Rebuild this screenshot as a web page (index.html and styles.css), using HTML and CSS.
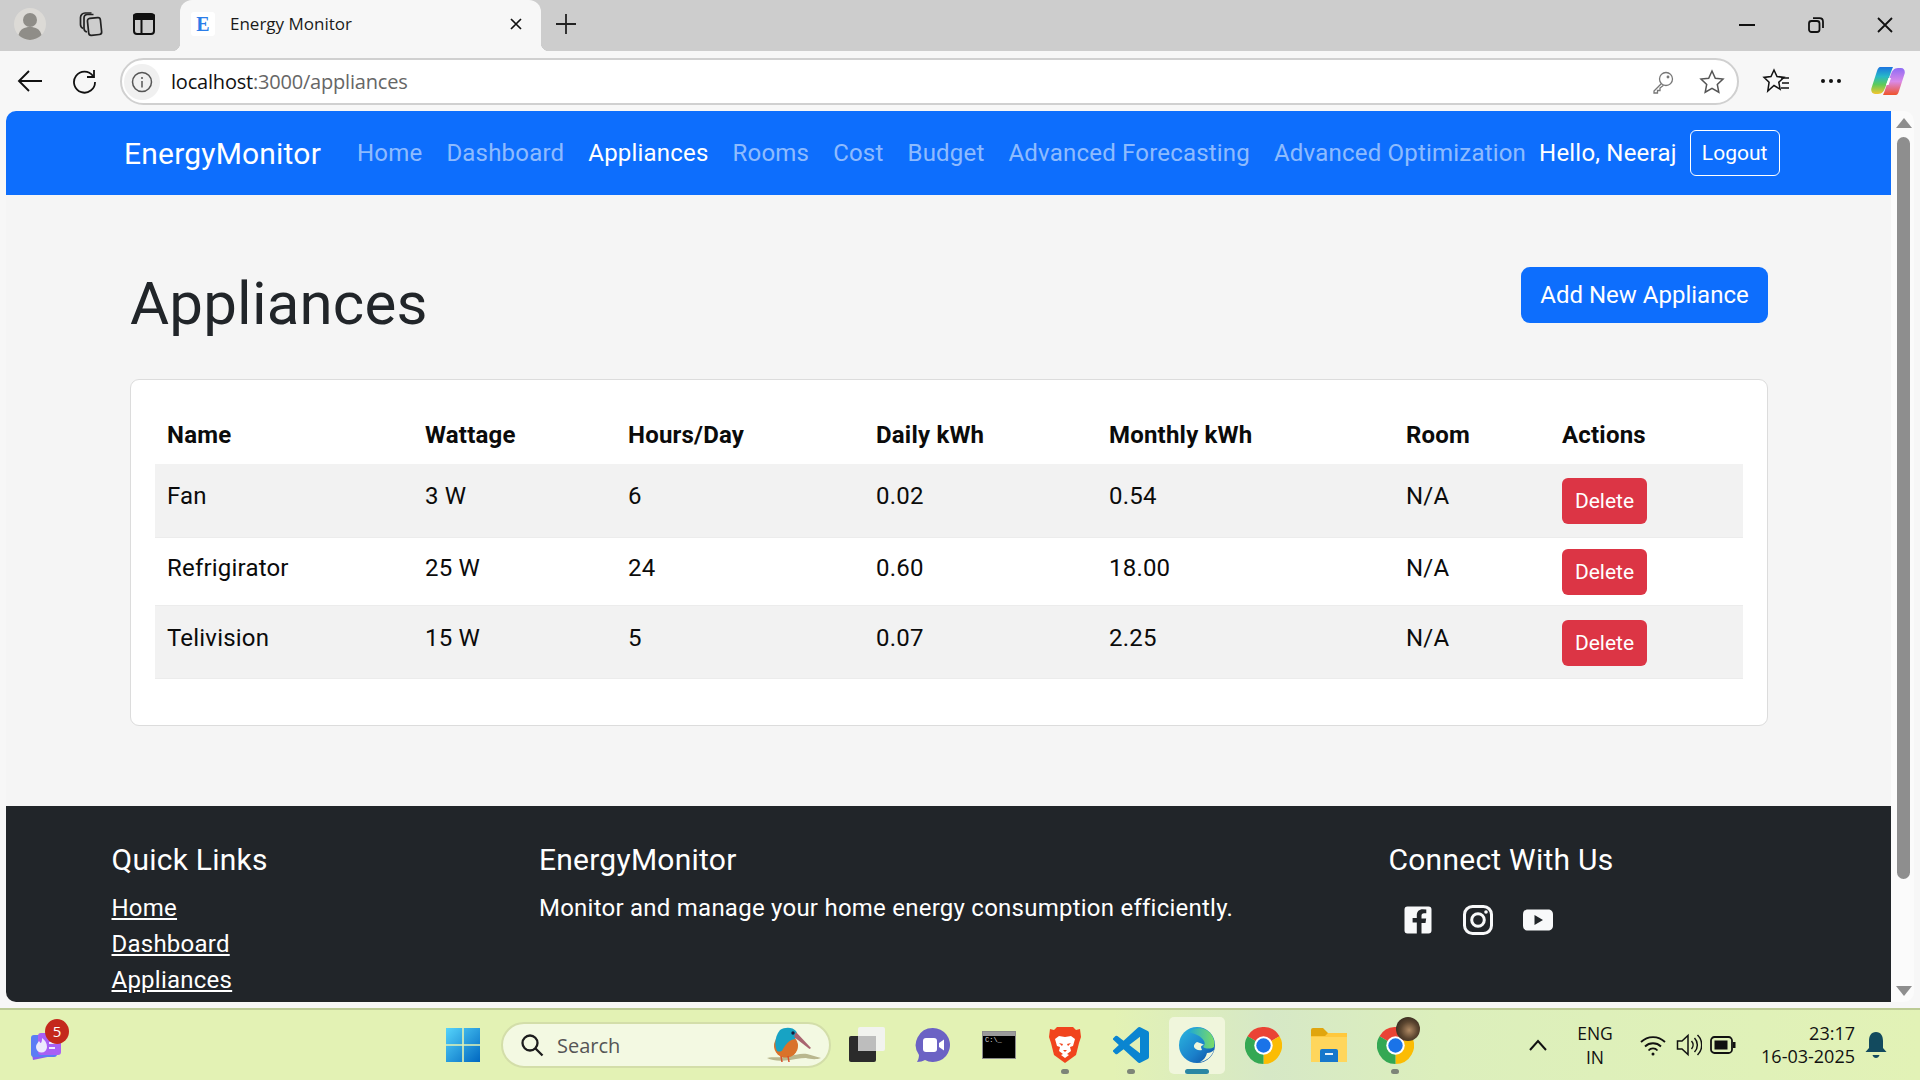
FILE: index.html
```html
<!DOCTYPE html>
<html lang="en">
<head>
<meta charset="utf-8">
<title>Energy Monitor</title>
<link rel="stylesheet" href="styles.css">
</head>
<body>
<svg class="defs" width="0" height="0" aria-hidden="true">
  <defs>
    <symbol id="chrome" viewBox="0 0 36 36">
      <path fill="#ea4335" d="M18 18L2.4 9A18 18 0 0 1 33.6 9Z"/>
      <path fill="#fbbc04" d="M18 18L33.6 9A18 18 0 0 1 18 36Z"/>
      <path fill="#34a853" d="M18 18L18 36A18 18 0 0 1 2.4 9Z"/>
      <circle cx="18" cy="18" r="9" fill="#fff"/>
      <circle cx="18" cy="18" r="7" fill="#1a73e8"/>
    </symbol>
  </defs>
</svg>

<header class="tabstrip">
  <div class="tab-left">
    <svg class="ic-profile" width="34" height="34" viewBox="0 0 34 34"><circle cx="17" cy="17" r="16" fill="#dcdad6"/><circle cx="17" cy="13" r="7" fill="#8f8d88"/><path d="M5.5 28c1.5-6 6-8 11.500-8s10 2 11.500 8a16 16 0 0 1-23 0z" fill="#8f8d88"/></svg>
    <svg class="ic-collections" width="26" height="26" viewBox="0 0 26 26" fill="none" stroke="#222" stroke-width="1.700"><rect x="10" y="7" width="13" height="17" rx="2.500" transform="rotate(-6 16 15)"/><path d="M9 21c-2-.5-3-1.500-3-3.500V7c0-2 1.500-3.500 3.500-3.500h6"/><path d="M5 17.500c-1.500-.8-2.500-2-2.500-4V6.500c0-2.500 2-4.500 4.500-4.500h6.500"/></svg>
    <svg class="ic-sidebar" width="24" height="24" viewBox="0 0 24 24" fill="none" stroke="#111" stroke-width="2"><rect x="2" y="2" width="20" height="20" rx="3"/><path d="M2 3.500h20v3.500H2z" fill="#111"/><path d="M9.500 7v15"/></svg>
  </div>
  <div class="tab">
    <span class="favicon">E</span>
    <span class="tab-title">Energy Monitor</span>
    <svg class="ic-x" width="14" height="14" viewBox="0 0 14 14" stroke="#111" stroke-width="1.700"><path d="M2 2l10 10M12 2L2 12"/></svg>
  </div>
  <svg class="ic-plus" width="22" height="22" viewBox="0 0 22 22" stroke="#222" stroke-width="1.800"><path d="M11 1v20M1 11h20"/></svg>
  <div class="winctl">
    <svg width="16" height="16" viewBox="0 0 16 16" stroke="#111" stroke-width="2"><path d="M0 8h16"/></svg>
    <svg width="16" height="16" viewBox="0 0 16 16" fill="none" stroke="#111" stroke-width="1.800"><rect x="1" y="4" width="10.500" height="11" rx="2.500"/><path d="M5 1.200h6.500c2 0 3.500 1.500 3.500 3.500V11"/></svg>
    <svg width="16" height="16" viewBox="0 0 16 16" stroke="#111" stroke-width="1.800"><path d="M1 1l14 14M15 1L1 15"/></svg>
  </div>
</header>

<div class="toolbar">
  <svg class="ic-back" width="26" height="24" viewBox="0 0 26 24" fill="none" stroke="#111" stroke-width="1.900"><path d="M25 12H2M12 2L2 12l10 10"/></svg>
  <svg class="ic-reload" width="26" height="26" viewBox="0 0 26 26" fill="none" stroke="#111" stroke-width="1.800"><path d="M22 8a10.500 10.500 0 1 0 2 6"/><path d="M23 2v7h-7"/></svg>
  <div class="addr">
    <span class="info"><svg width="22" height="22" viewBox="0 0 22 22" fill="none" stroke="#555" stroke-width="1.500"><circle cx="11" cy="11" r="9.500"/><path d="M11 10v6.500M11 6v2"/></svg></span>
    <span class="url"><span class="url-host">localhost</span>:3000/appliances</span>
    <svg class="ic-key" width="24" height="24" viewBox="0 0 24 24" fill="none" stroke="#777" stroke-width="1.300"><circle cx="15" cy="9" r="6.500"/><circle cx="17" cy="7" r=".8" fill="#777"/><path d="M10.500 13.500L3 21v2h3.500v-2.500H9V18l3.500-2.800"/></svg>
    <svg class="ic-star" width="26" height="26" viewBox="0 0 26 26" fill="none" stroke="#555" stroke-width="1.500"><path d="M13 2l3.300 7.200 7.700.9-5.700 5.300 1.500 7.800L13 19.300 6.200 23.200l1.500-7.800L2 10.100l7.700-.9z"/></svg>
  </div>
  <svg class="ic-favs" width="28" height="28" viewBox="0 0 28 28" fill="none" stroke="#111" stroke-width="1.500"><path d="M12 3l3 6.500 7 .9-5.200 4.800 1.300 7L12 18.500 5.800 24l1.300-8.800L2 10.400l7-.9z"/><path d="M19 11h8M20 16h7M19 21h8"/></svg>
  <svg class="ic-more" width="22" height="6" viewBox="0 0 22 6" fill="#111"><circle cx="3" cy="3" r="2"/><circle cx="11" cy="3" r="2"/><circle cx="19" cy="3" r="2"/></svg>
  <svg class="ic-copilot" width="34" height="30" viewBox="0 0 34 30">
    <defs>
      <linearGradient id="cpa" x1="0" y1="0" x2="0" y2="1"><stop offset="0" stop-color="#1b74e0"/><stop offset=".35" stop-color="#27b8c8"/><stop offset=".65" stop-color="#5ecb5a"/><stop offset="1" stop-color="#f5c52c"/></linearGradient>
      <linearGradient id="cpb" x1="0" y1="0" x2="0" y2="1"><stop offset="0" stop-color="#8f6cf5"/><stop offset=".5" stop-color="#d98ae8"/><stop offset="1" stop-color="#f0532a"/></linearGradient>
    </defs>
    <path fill="url(#cpb)" d="M25 29H12c1-2 2-5 3-8l5-13c1-3 3-6 7-6h3c3 0 4.500 3 3.500 6L28 25c-1 3-2 4-3 4z"/>
    <path fill="url(#cpa)" d="M9 1h13c-1 2-2 5-3 8l-5 13c-1 3-3 6-7 6H4c-3 0-4.500-3-3.500-6L6 5c1-3 2-4 3-4z"/>
    <path fill="#fff" d="M17.500 12h2.500l-2.500 7H15z"/>
  </svg>
</div>

<div class="viewport">
  <div class="page">
    <nav class="navbar">
      <a class="brand">EnergyMonitor</a>
      <a class="nav-link">Home</a>
      <a class="nav-link">Dashboard</a>
      <a class="nav-link active">Appliances</a>
      <a class="nav-link">Rooms</a>
      <a class="nav-link">Cost</a>
      <a class="nav-link">Budget</a>
      <a class="nav-link">Advanced Forecasting</a>
      <a class="nav-link">Advanced Optimization</a>
      <span class="hello">Hello, Neeraj</span>
      <button class="btn-logout">Logout</button>
    </nav>
    <main class="main">
      <div class="title-row">
        <h1 class="title">Appliances</h1>
        <button class="btn-add">Add New Appliance</button>
      </div>
      <section class="card">
        <table class="table">
          <colgroup>
            <col class="c1"><col class="c2"><col class="c3"><col class="c4"><col class="c5"><col class="c6"><col class="c7">
          </colgroup>
          <thead>
            <tr><th>Name</th><th>Wattage</th><th>Hours/Day</th><th>Daily kWh</th><th>Monthly kWh</th><th>Room</th><th>Actions</th></tr>
          </thead>
          <tbody>
            <tr class="stripe"><td>Fan</td><td>3 W</td><td>6</td><td>0.02</td><td>0.54</td><td>N/A</td><td><button class="btn-del">Delete</button></td></tr>
            <tr class="plain"><td>Refrigirator</td><td>25 W</td><td>24</td><td>0.60</td><td>18.00</td><td>N/A</td><td><button class="btn-del">Delete</button></td></tr>
            <tr class="stripe"><td>Telivision</td><td>15 W</td><td>5</td><td>0.07</td><td>2.25</td><td>N/A</td><td><button class="btn-del">Delete</button></td></tr>
          </tbody>
        </table>
      </section>
    </main>
    <footer class="footer">
      <div class="foot-col">
        <h5 class="foot-h">Quick Links</h5>
        <a class="foot-link">Home</a>
        <a class="foot-link">Dashboard</a>
        <a class="foot-link">Appliances</a>
      </div>
      <div class="foot-col">
        <h5 class="foot-h">EnergyMonitor</h5>
        <p class="foot-p">Monitor and manage your home energy consumption efficiently.</p>
      </div>
      <div class="foot-col">
        <h5 class="foot-h">Connect With Us</h5>
        <div class="socials">
          <svg width="36" height="36" viewBox="0 0 36 36" fill="#f8f9fa"><path d="M7.500 4.500h21a3 3 0 0 1 3 3v21a3 3 0 0 1-3 3h-7v-10.500h4l.7-4.500h-4.700v-2.700c0-1.500.7-2.500 2.600-2.500h2.200V7.500a22 22 0 0 0-3.500-.3c-3.700 0-6 2.200-6 6.100V16h-4.200v4.500h4.200v11H7.500a3 3 0 0 1-3-3v-21a3 3 0 0 1 3-3z"/></svg>
          <svg width="36" height="36" viewBox="0 0 36 36" fill="none" stroke="#f8f9fa" stroke-width="3"><rect x="4.500" y="4.500" width="27" height="27" rx="8"/><circle cx="18" cy="18" r="6.300"/><circle cx="26" cy="10" r="1.800" fill="#f8f9fa" stroke="none"/></svg>
          <svg width="36" height="36" viewBox="0 0 36 36" fill="#f8f9fa"><path fill-rule="evenodd" d="M8 7.500h20c3 0 5 1.500 5 5v11c0 3.500-2 5-5 5H8c-3 0-5-1.500-5-5v-11c0-3.500 2-5 5-5zM14.500 13v10l8.500-5z"/></svg>
        </div>
      </div>
    </footer>
  </div>
  <div class="scrollbar">
    <span class="arrow-up"></span>
    <span class="thumb"></span>
    <span class="arrow-down"></span>
  </div>
</div>

<div class="taskbar">
  <div class="tb-widget">
    <svg width="40" height="44" viewBox="0 0 40 44">
      <path fill="#8a5cf0" d="M4 30l24-3 2 10-24 5z"/>
      <rect x="4" y="17" width="26" height="22" rx="3" fill="#5b7cf5"/>
      <rect x="11" y="15" width="23" height="22" rx="3" fill="#a860f5"/>
      <path fill="#eceafd" d="M15 20c3 2 5 5 5 9a5.500 5.500 0 0 1-11 0c0-3 2-4 3-6 1 1 1 2 2 2 1-2 1-3 1-5z"/>
      <path stroke="#eceafd" stroke-width="2" d="M22 25h8M22 30h6"/>
    </svg>
    <span class="tb-badge">5</span>
  </div>
  <div class="tb-center">
    <div class="tb-item">
      <svg width="36" height="36" viewBox="0 0 36 36">
        <defs><linearGradient id="win" x1="0" y1="0" x2="1" y2="1"><stop offset="0" stop-color="#55d4fb"/><stop offset="1" stop-color="#0067c0"/></linearGradient></defs>
        <path fill="url(#win)" d="M1 1h16.200v16.200H1zM18.800 1H35v16.200H18.800zM1 18.800h16.200V35H1zM18.800 18.800H35V35H18.800z"/>
      </svg>
    </div>
    <div class="tb-search">
      <svg width="24" height="24" viewBox="0 0 24 24" fill="none" stroke="#1c1c1c" stroke-width="2.300"><circle cx="10" cy="10" r="7.500"/><path d="M15.500 15.500l7 7"/></svg>
      <span class="search-text">Search</span>
      <svg class="bird" width="54" height="36" viewBox="0 0 54 36">
        <path fill="#b9b78e" d="M0 31c6-1.500 12 0 20-1.500 8-1.500 14-3.500 20-2.500 5 1 9 3 14 4-5 2-11 1-15 0-6 0-14 2-21 2.500-7 .5-13 0-18-2.500z"/>
        <ellipse cx="19" cy="19" rx="12" ry="11.500" fill="#d9722a"/>
        <path fill="#17a3c4" d="M13 3c5-3.500 13-3 16 1 2 3 1 6-1 8-6 1-9 5-12 10-1 3-4 3-6 2C7 18 8 9 13 3z"/>
        <circle cx="26" cy="6" r="1.700" fill="#1b1b3a"/>
        <path fill="#a8646f" d="M29 5l15 16-1.500 1L27 10z"/>
        <path stroke="#d8502a" stroke-width="1.500" d="M14 29l1 6M21 29l1 6"/>
      </svg>
    </div>
    <div class="tb-item">
      <svg width="38" height="38" viewBox="0 0 38 38"><rect x="1" y="10" width="27" height="26" rx="2" fill="#2b2b2b"/><rect x="10" y="1" width="27" height="24" rx="2" fill="#f2f3ef"/><rect x="10" y="10" width="18" height="15" fill="#bdbdbd"/></svg>
    </div>
    <div class="tb-item">
      <svg width="36" height="36" viewBox="0 0 36 36"><path fill="#6b62c4" d="M18 1a17 17 0 1 1-8 32c-2 1-5 2-8 2 1-2 2-4 2-7A17 17 0 0 1 18 1z"/><rect x="8" y="11" width="14" height="14" rx="3" fill="#fff"/><path fill="#fff" d="M24 16l5-3.500v11L24 20z"/></svg>
    </div>
    <div class="tb-item">
      <div class="term"><span class="term-bar"></span><span class="term-body">C:\_</span></div>
    </div>
    <div class="tb-item dot">
      <svg width="32" height="36" viewBox="0 0 32 36"><path fill="#f1441d" d="M8 0h16l3 3 4-1 1 8-2 6-3 12-11 8L5 28 2 16 0 10l1-8 4 1z"/><path fill="#fff" d="M10 9l6 1 6-1 4 3-2 7-3 1 1 4-4 3 2 1-4 3-4-3 2-1-4-3 1-4-3-1-2-7z"/><path fill="#f1441d" d="M10 16l4 1-1 2zM22 16l-4 1 1 2zM14 23h4l-2 2z"/></svg>
    </div>
    <div class="tb-item dot">
      <svg width="36" height="36" viewBox="0 0 24 24"><path fill="#0a85d1" d="M23.150 2.587L18.210.21a1.494 1.494 0 0 0-1.705.29l-9.460 8.630-4.120-3.128a.999.999 0 0 0-1.276.057L.327 7.261A1 1 0 0 0 .326 8.740L3.899 12 .326 15.260a1 1 0 0 0 .001 1.479L1.650 17.940a.999.999 0 0 0 1.276.057l4.120-3.128 9.460 8.630a1.492 1.492 0 0 0 1.704.29l4.942-2.377A1.500 1.500 0 0 0 24 20.060V3.939a1.500 1.500 0 0 0-.850-1.352zm-5.146 14.861L10.826 12l7.178-5.448v10.896z"/></svg>
    </div>
    <div class="tb-item active-item">
      <svg width="36" height="38" viewBox="0 0 36 38">
        <defs>
          <linearGradient id="edgeA" x1="0" y1="0" x2="1" y2="1"><stop offset="0" stop-color="#2cb8e0"/><stop offset=".6" stop-color="#1a7fca"/><stop offset="1" stop-color="#0b4a9c"/></linearGradient>
          <linearGradient id="edgeB" x1="0" y1="0" x2="1" y2="0"><stop offset="0" stop-color="#1aa6d8"/><stop offset="1" stop-color="#7bdc66"/></linearGradient>
        </defs>
        <circle cx="18" cy="19" r="18" fill="url(#edgeA)"/>
        <path fill="url(#edgeB)" d="M8 7c6-6 18-7 24 1 3 4 4 9 3 13-3 2-8 2-11 0 2-2 2-4 1-6-3-5-11-9-17-8z"/>
        <path fill="#f0f6dc" d="M23 24c-4 1-7-1-8-3-.5-2 1-4 3-5 3 1 6 2 7 3-2 0-3 1-3 2 0 1 1 2.500 1 3z"/>
        <path fill="#f0f6dc" d="M35 24c-2 6-7 11-14 12 4-2 6-5 7-9 3 0 5-1 7-3z"/>
      </svg>
    </div>
    <div class="tb-item"><svg width="37" height="37"><use href="#chrome"/></svg></div>
    <div class="tb-item">
      <svg width="36" height="36" viewBox="0 0 36 36"><path fill="#e0a50e" d="M0 3a2 2 0 0 1 2-2h10l5 5h17a2 2 0 0 1 2 2v6H0z"/><path fill="#ffd65c" d="M0 9h36v26H0z"/><path fill="#ffc83d" d="M0 9h14l3-3h19v4H0z"/><path fill="#1677cc" d="M9 24a2 2 0 0 1 2-2h14a2 2 0 0 1 2 2v11H9z"/><rect x="14" y="26" width="8" height="2" fill="#e8f2fa"/></svg>
    </div>
    <div class="tb-item dot">
      <svg class="chrome2" width="37" height="37"><use href="#chrome"/></svg>
      <span class="avatar"></span>
    </div>
  </div>
  <div class="tray">
    <svg class="tray-up" width="18" height="12" viewBox="0 0 18 12" fill="none" stroke="#111" stroke-width="2"><path d="M1 11l8-9 8 9"/></svg>
    <div class="lang"><span>ENG</span><span>IN</span></div>
    <svg class="tray-wifi" width="26" height="24" viewBox="0 0 26 24" fill="none" stroke="#111" stroke-width="1.800"><path d="M1 9a17 17 0 0 1 24 0M5 13.500a11.500 11.500 0 0 1 16 0M8.500 17.500a6 6 0 0 1 9 0"/><circle cx="13" cy="21" r="1.500" fill="#111" stroke="none"/></svg>
    <svg class="tray-vol" width="26" height="26" viewBox="0 0 26 26" fill="none" stroke="#111" stroke-width="1.500"><path d="M1.500 9h4.500l6-5.500v19L6 17H1.500z"/><path d="M15.500 9a6 6 0 0 1 0 8M18.500 6a10 10 0 0 1 0 14M21.500 3a14 14 0 0 1 0 20"/></svg>
    <svg class="tray-bat" width="26" height="18" viewBox="0 0 26 18"><rect x="1" y="1" width="21" height="16" rx="3.500" fill="none" stroke="#111" stroke-width="1.800"/><rect x="4.500" y="4.500" width="13" height="9" fill="#111"/><rect x="23" y="6" width="2.500" height="6" fill="#111"/></svg>
    <div class="clock"><span>23:17</span><span>16-03-2025</span></div>
    <svg class="tray-bell" width="22" height="28" viewBox="0 0 22 28" fill="#124a5e"><path d="M11 1c5 0 7 4 7 9v7l3.500 4H.5L4 17v-7c0-5 2-9 7-9z"/><path d="M7.500 24h7c-.5 2-2 3-3.500 3s-3-1-3.500-3z"/></svg>
  </div>
</div>
</body>
</html>
```

FILE: styles.css
```css
* { box-sizing: border-box; }
html, body { margin: 0; height: 100%; }
body {
  width: 1920px;
  height: 1080px;
  overflow: hidden;
  display: flex;
  flex-direction: column;
  background: #f7f7f7;
  font-family: Roboto, "Liberation Sans", sans-serif;
}
svg { display: block; flex: none; }
.defs { position: absolute; }

/* browser chrome */
.tabstrip {
  height: 51px;
  flex: none;
  display: flex;
  align-items: center;
  padding-bottom: 4px;
  background: #cdcdcd;
}
.tab-left { width: 180px; display: flex; align-items: center; padding-left: 13px; }
.ic-collections { margin-left: 31px; }
.ic-sidebar { margin-left: 28px; }
.tab {
  position: relative;
  width: 361px;
  height: 51px;
  margin-bottom: -4px;
  display: flex;
  align-items: center;
  padding: 0 0 4px 11px;
  background: #f7f7f7;
  border-radius: 12px 12px 0 0;
}
.tab::before, .tab::after {
  content: "";
  position: absolute;
  bottom: 0;
  width: 8px;
  height: 8px;
}
.tab::before { left: -8px; background: radial-gradient(circle at 0 0, transparent 8px, #f7f7f7 8.500px); }
.tab::after { right: -8px; background: radial-gradient(circle at 100% 0, transparent 8px, #f7f7f7 8.500px); }
.favicon {
  width: 24px;
  height: 24px;
  background: #fff;
  border-radius: 3px;
  color: #2b7de9;
  font: 700 20px/24px "Liberation Serif", serif;
  text-align: center;
}
.tab-title { margin-left: 15px; width: 279px; font: 17px "Open Sans", sans-serif; color: #1a1a1a; }
.ic-plus { margin-left: 14px; }
.winctl { margin-left: auto; margin-top: 2px; display: flex; gap: 53px; padding-right: 27px; }

.toolbar {
  height: 60px;
  flex: none;
  display: flex;
  align-items: center;
  background: #f7f7f7;
  padding-left: 17px;
}
.ic-reload { margin-left: 28px; }
.addr {
  width: 1619px;
  height: 47px;
  margin-left: 23px;
  margin-top: 1px;
  display: flex;
  align-items: center;
  background: #fff;
  border: 2px solid #d0d0d0;
  border-radius: 24px;
}
.info {
  width: 36px;
  height: 36px;
  margin-left: 2px;
  border-radius: 50%;
  background: #f0f0f0;
  display: flex;
  align-items: center;
  justify-content: center;
}
.url { margin-left: 11px; font: 20px "Open Sans", sans-serif; color: #666; letter-spacing: -.2px; }
.url-host { color: #111; }
.ic-key { margin-left: auto; }
.ic-star { margin-left: 24px; margin-right: 12px; }
.ic-favs { margin-left: 23px; }
.ic-more { margin-left: 30px; }
.ic-copilot { margin-left: 29px; }

/* viewport */
.viewport {
  height: 891px;
  flex: none;
  margin-left: 6px;
  width: 1908px;
  display: flex;
  border-radius: 10px;
  overflow: hidden;
}
.page { width: 1885px; flex: none; display: flex; flex-direction: column; background: #f5f5f5; }
.scrollbar {
  width: 23px;
  flex: none;
  background: #fbfbfb;
  display: flex;
  flex-direction: column;
  align-items: center;
  padding: 7px 0 6px 2px;
}
.arrow-up, .arrow-down { width: 0; height: 0; border-left: 8px solid transparent; border-right: 8px solid transparent; }
.arrow-up { border-bottom: 10px solid #8e8e8e; }
.arrow-down { border-top: 10px solid #8e8e8e; }
.thumb { width: 13px; height: 742px; margin: 9px 0 auto; border-radius: 7px; background: #8e8e8e; }

/* navbar */
.navbar {
  height: 84px;
  flex: none;
  display: flex;
  align-items: center;
  background: #0d6efd;
  padding-left: 118px;
  letter-spacing: .2px;
}
.brand { font-size: 30px; color: #fff; margin-right: 24px; }
.nav-link { font-size: 24px; padding: 0 12px; color: rgba(255, 255, 255, .55); }
.nav-link.active { color: #fff; }
.hello { font-size: 24px; color: #fff; margin-left: 1px; }
.btn-logout {
  width: 90px;
  height: 46px;
  margin-left: 13px;
  padding: 0;
  background: transparent;
  border: 1.500px solid #fff;
  border-radius: 6px;
  color: #fff;
  font: 21px Roboto, sans-serif;
}

/* main */
.main { flex: 1; padding: 72px 123px 0 124px; min-height: 0; }
.title-row { height: 112px; display: flex; justify-content: space-between; align-items: flex-start; }
.title { margin: 1px 0 0; font-size: 60px; font-weight: 400; line-height: 72px; color: #212529; letter-spacing: .2px; }
.btn-add {
  width: 247px;
  height: 56px;
  padding: 0;
  border: 0;
  border-radius: 9px;
  background: #0d6efd;
  color: #fff;
  font: 24px Roboto, sans-serif;
}
.card {
  height: 347px;
  background: #fff;
  border: 1.500px solid #dcdcdc;
  border-radius: 9px;
  padding: 24px;
}
.table { width: 100%; border-collapse: collapse; table-layout: fixed; font-size: 24px; color: #0b0b0b; letter-spacing: .2px; }
.c1 { width: 258px; } .c2 { width: 203px; } .c3 { width: 248px; } .c4 { width: 233px; }
.c5 { width: 297px; } .c6 { width: 156px; } .c7 { width: 193px; }
th { height: 60px; padding: 2px 12px 0; text-align: left; font-weight: 700; }
td { padding: 0 12px; vertical-align: top; line-height: 36px; }
.stripe { height: 73px; background: #f2f2f2; }
.stripe td { padding-top: 14px; }
.plain { height: 68px; }
.plain td { padding-top: 12px; }
tbody tr { border-bottom: 1px solid #ececec; }
.btn-del {
  display: block;
  width: 85px;
  height: 46px;
  padding: 0;
  border: 0;
  border-radius: 6px;
  background: #dc3545;
  color: #fff;
  font: 21px Roboto, sans-serif;
}
.plain .btn-del { margin-top: -1px; }

/* footer */
.footer {
  height: 196px;
  flex: none;
  display: grid;
  grid-template-columns: 427.500px 849.500px 1fr;
  padding: 36px 0 0 105.500px;
  background: #212529;
  color: #fff;
  overflow: hidden;
  letter-spacing: .24px;
}
.foot-col { display: flex; flex-direction: column; align-items: flex-start; }
.foot-h { margin: 0 0 12px; font-size: 30px; font-weight: 400; line-height: 36px; }
.foot-link { font-size: 24px; line-height: 36px; color: #fff; text-decoration: underline; }
.foot-p { margin: 0; font-size: 24px; line-height: 36px; }
.socials { display: flex; gap: 24px; padding: 12px 0 0 11px; }

/* taskbar */
.taskbar {
  margin-top: 6px;
  height: 72px;
  flex: none;
  display: flex;
  align-items: center;
  border-top: 2px solid #bccb95;
  background: linear-gradient(90deg, #e3f2b4 0%, #e3f2b4 58%, #d6e8c6 66%, #dcefbc 75%, #e2f2b6 100%);
}
.tb-widget { position: relative; width: 40px; height: 44px; margin: 0 0 10px 27px; }
.tb-badge {
  position: absolute;
  top: 1px;
  right: -2px;
  width: 24px;
  height: 25px;
  border-radius: 50%;
  background: #c4281c;
  color: #fff;
  font: 15px/25px "Open Sans", sans-serif;
  text-align: center;
}
.tb-center { display: flex; align-items: center; margin-left: 363px; }
.tb-item {
  position: relative;
  isolation: isolate;
  width: 66px;
  height: 57px;
  display: flex;
  align-items: center;
  justify-content: center;
  flex: none;
}
.tb-search {
  width: 330px;
  height: 46px;
  margin: 0 3px 0 5px;
  display: flex;
  align-items: center;
  padding: 0 8px 0 17px;
  background: #f3f9e2;
  border: 2px solid #d3dea9;
  border-radius: 23px;
}
.search-text { margin-left: 13px; font: 20px "Open Sans", sans-serif; color: #555; }
.bird { margin-left: auto; }
.term {
  width: 34px;
  height: 28px;
  display: flex;
  flex-direction: column;
  border: 1px solid #8c8c8c;
  background: #000;
}
.term-bar { height: 4px; background: #9a9a9a; }
.term-body { padding-left: 2px; font: 7px/9px "Liberation Mono", monospace; color: #ddd; }
.dot::after {
  content: "";
  position: absolute;
  bottom: 0;
  left: 29px;
  width: 8px;
  height: 5px;
  border-radius: 3px;
  background: #7d8578;
}
.active-item::before {
  content: "";
  position: absolute;
  z-index: -1;
  top: 0;
  bottom: 0;
  left: 5px;
  right: 5px;
  background: #f0f6dc;
  border-radius: 5px;
}
.active-item::after {
  content: "";
  position: absolute;
  bottom: 0;
  left: 21px;
  width: 24px;
  height: 5px;
  border-radius: 3px;
  background: #2a87a3;
}
.avatar {
  position: absolute;
  top: 0;
  right: 8px;
  width: 24px;
  height: 24px;
  border-radius: 50%;
  background: radial-gradient(circle at 55% 55%, #b08a64 0, #5c4630 45%, #1c1712 100%);
}
.tray { display: flex; align-items: center; flex: 1; min-width: 0; }
.tray-up { margin-left: 101px; }
.lang {
  width: 50px;
  margin-left: 23px;
  display: flex;
  flex-direction: column;
  align-items: center;
  font: 17.500px/24px "Open Sans", sans-serif;
  color: #111;
}
.tray-wifi { margin-left: 20px; }
.tray-vol { margin-left: 10px; }
.tray-bat { margin-left: 8px; }
.clock {
  width: 112px;
  margin-left: 7px;
  display: flex;
  flex-direction: column;
  align-items: flex-end;
  font: 18px/23px "Open Sans", sans-serif;
  color: #111;
}
.tray-bell { margin-left: 10px; }
```
